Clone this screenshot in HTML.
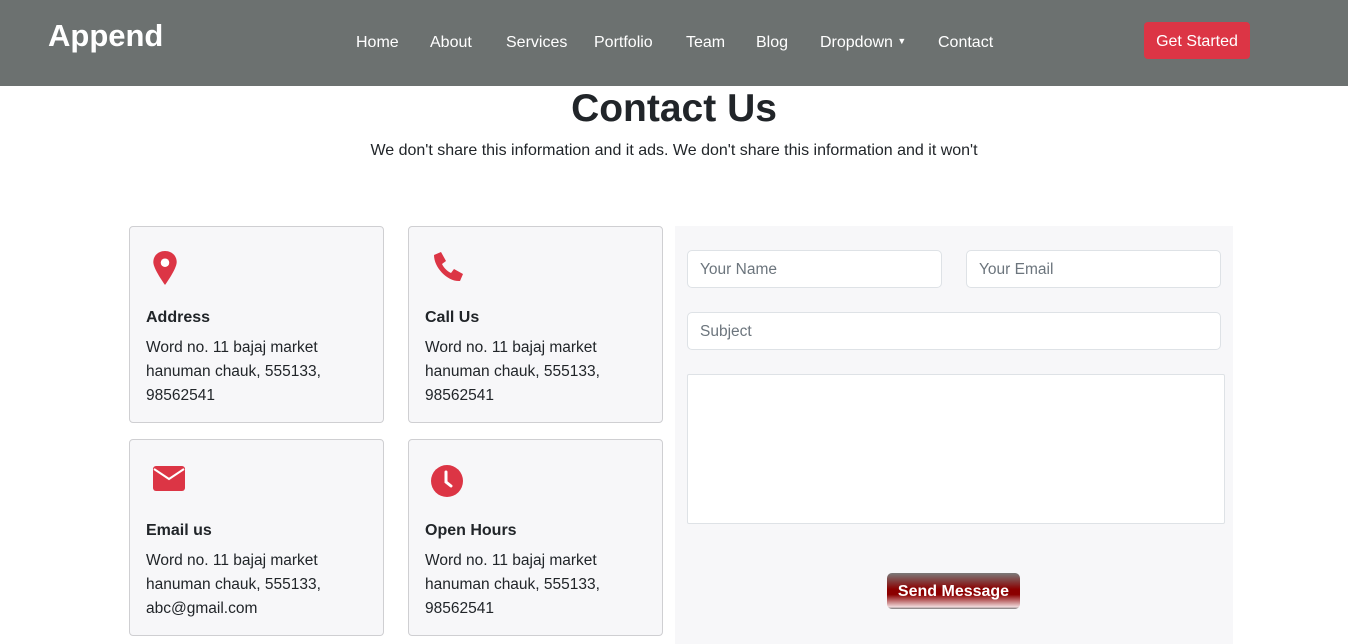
<!DOCTYPE html>
<html><head><meta charset="utf-8"><style>
*{box-sizing:border-box;margin:0;padding:0}
body{width:1348px;height:644px;overflow:hidden;background:#fff;font-family:"Liberation Sans",sans-serif;color:#212529;position:relative}
.hdr{position:absolute;left:0;top:0;width:1348px;height:86px;background:#6c7170}
.logo{position:absolute;left:48px;top:18px;color:#fff;font-size:31px;font-weight:bold}
.nav{position:absolute;top:34px;font-size:16px;color:#fff}
.btn{position:absolute;left:1144px;top:22px;width:106px;height:37px;background:#dc3545;border-radius:4px;color:#fff;font-size:16px;text-align:center;line-height:39px}
h1{position:absolute;left:0;width:1348px;top:87px;text-align:center;font-size:39px;font-weight:bold}
.sub{position:absolute;left:0;width:1348px;top:142px;text-align:center;font-size:16px}
.card{position:absolute;width:255px;height:197px;border:1px solid #cfcfd2;border-radius:4px;background:#f7f7f9}
.card svg{position:absolute;left:22px;top:24px}
.card b{position:absolute;left:16px;top:82px;font-size:16px}
.card p{position:absolute;left:16px;top:109px;font-size:15.5px;line-height:24px}
.form{position:absolute;left:675px;top:226px;width:558px;height:418px;background:#f7f7f9}
.in{position:absolute;background:#fff;border:1px solid #dee2e6;border-radius:5px;font-size:15.5px;color:#6c757d;padding:10px 12px}
.send{position:absolute;left:887px;top:573px;width:133px;height:36px;border-radius:5px;color:#fff;font-weight:bold;font-size:16px;text-align:center;line-height:38px;background:linear-gradient(#7a7a7a 0%,#8b0000 45%,#8b0000 60%,#f0d8da 94%,#777 100%)}
</style></head><body>
<div class="hdr">
<div class="logo">Append</div>
<span class="nav" style="left:356px">Home</span>
<span class="nav" style="left:430px">About</span>
<span class="nav" style="left:506px">Services</span>
<span class="nav" style="left:594px">Portfolio</span>
<span class="nav" style="left:686px">Team</span>
<span class="nav" style="left:756px">Blog</span>
<span class="nav" style="left:820px">Dropdown <span style="font-size:9px;vertical-align:3px">▼</span></span>
<span class="nav" style="left:938px">Contact</span>
<div class="btn">Get Started</div>
</div>
<h1>Contact Us</h1>
<div class="sub">We don't share this information and it ads. We don't share this information and it won't</div>

<div class="card" style="left:129px;top:226px"><svg width="26" height="34" viewBox="0 0 24 32"><path d="M12 0C5.5 0 1 4.6 1 10.5 1 17 12 32 12 32S23 17 23 10.5C23 4.6 18.5 0 12 0z" fill="#dc3545"/><circle cx="12" cy="11" r="4" fill="#fff"/></svg><b>Address</b><p>Word no. 11 bajaj market<br>hanuman chauk, 555133,<br>98562541</p></div>
<div class="card" style="left:408px;top:226px"><svg width="34" height="34" viewBox="0 0 34 34"><path d="M3 4l7-3 5 9-4 3c2 4 5 7 9 9l3-4 9 5-3 7C17 31 3 17 3 4z" fill="#dc3545"/></svg><b>Call Us</b><p>Word no. 11 bajaj market<br>hanuman chauk, 555133,<br>98562541</p></div>
<div class="card" style="left:129px;top:439px"><svg width="34" height="30" viewBox="0 0 34 30"><rect x="1" y="2" width="32" height="25" rx="3" fill="#dc3545"/><path d="M2 5l15 10 15-10" stroke="#fff" stroke-width="2" fill="none"/></svg><b>Email us</b><p>Word no. 11 bajaj market<br>hanuman chauk, 555133,<br>abc@gmail.com</p></div>
<div class="card" style="left:408px;top:439px"><svg width="34" height="34" viewBox="0 0 34 34"><circle cx="16" cy="17" r="16" fill="#dc3545"/><path d="M15 8v10l5 4" stroke="#fff" stroke-width="3" fill="none" stroke-linecap="round"/></svg><b>Open Hours</b><p>Word no. 11 bajaj market<br>hanuman chauk, 555133,<br>98562541</p></div>

<div class="form"></div>
<div class="in" style="left:687px;top:250px;width:255px;height:38px">Your Name</div>
<div class="in" style="left:966px;top:250px;width:255px;height:38px">Your Email</div>
<div class="in" style="left:687px;top:312px;width:534px;height:38px">Subject</div>
<div class="in" style="left:687px;top:374px;width:538px;height:150px;border-radius:2px"></div>
<div class="send">Send Message</div>
</body></html>
